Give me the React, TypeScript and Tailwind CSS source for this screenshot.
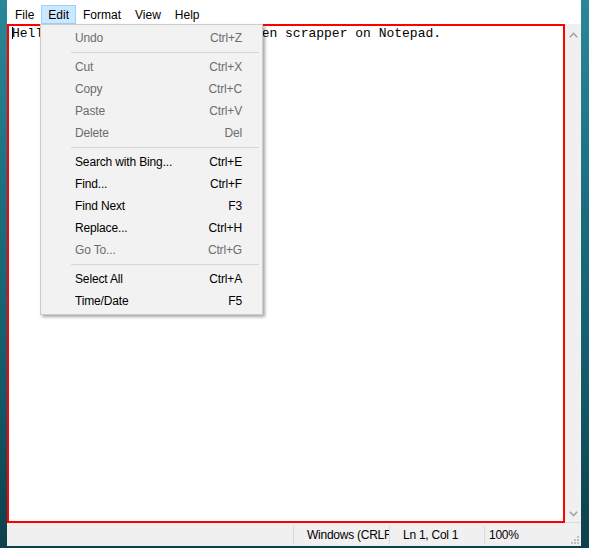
const ui = '"Liberation Sans", Arial, sans-serif';
const mono = '"Liberation Mono", "Courier New", monospace';

type Item = { label: string; key: string; off?: boolean } | 'sep';

const editItems: Item[] = [
  { label: 'Undo', key: 'Ctrl+Z', off: true },
  'sep',
  { label: 'Cut', key: 'Ctrl+X', off: true },
  { label: 'Copy', key: 'Ctrl+C', off: true },
  { label: 'Paste', key: 'Ctrl+V', off: true },
  { label: 'Delete', key: 'Del', off: true },
  'sep',
  { label: 'Search with Bing...', key: 'Ctrl+E' },
  { label: 'Find...', key: 'Ctrl+F' },
  { label: 'Find Next', key: 'F3' },
  { label: 'Replace...', key: 'Ctrl+H' },
  { label: 'Go To...', key: 'Ctrl+G', off: true },
  'sep',
  { label: 'Select All', key: 'Ctrl+A' },
  { label: 'Time/Date', key: 'F5' },
];

function EditMenu() {
  return (
    <div className="absolute left-[33px] top-[24px] z-10 w-[223px] border border-[#cccccc] bg-[#f2f2f2] py-[2px] shadow-[2px_2px_3px_rgba(0,0,0,0.35)]">
      {editItems.map((it, i) =>
        it === 'sep' ? (
          <div key={i} className="py-[3px] pl-[30px] pr-[3px]">
            <div className="h-px bg-[#d7d7d7]" />
          </div>
        ) : (
          <div
            key={i}
            className={`flex h-[22px] items-center justify-between pl-[34px] pr-[20px] text-[12px] tracking-[-0.15px] ${
              it.off ? 'text-[#6d6d6d]' : 'text-black'
            }`}
          >
            <span>{it.label}</span>
            <span>{it.key}</span>
          </div>
        ),
      )}
    </div>
  );
}

function Chevron({ down }: { down?: boolean }) {
  return (
    <svg width="9" height="6" viewBox="0 0 9 6" className="block">
      <path
        d={down ? 'M0.8 0.8 L4.5 4.5 L8.2 0.8' : 'M0.8 5.2 L4.5 1.5 L8.2 5.2'}
        fill="none"
        stroke="#a6a6a6"
        strokeWidth="1.6"
      />
    </svg>
  );
}

function Grip() {
  const dots = [
    [6, 0],
    [3, 3],
    [6, 3],
    [0, 6],
    [3, 6],
    [6, 6],
  ];
  return (
    <svg width="8" height="8" viewBox="0 0 8 8" className="block">
      {dots.map(([x, y], i) => (
        <rect key={i} x={x} y={y} width="2" height="2" fill="#bfbfbf" />
      ))}
    </svg>
  );
}

export default function App() {
  return (
    <div
      className="flex h-[548px] w-[589px] overflow-hidden bg-[linear-gradient(180deg,#2a8797_0%,#1b6f80_35%,#145a69_70%,#0e3f4c_100%)]"
      style={{ fontFamily: ui }}
    >
      <div className="relative ml-[7px] flex h-[546px] w-[574px] flex-col bg-white">
        {/* menu bar */}
        <div className="flex h-[24px] items-start pl-[1px] pt-[5px] text-[12px] text-black">
          {['File', 'Edit', 'Format', 'View', 'Help'].map((m) => (
            <div
              key={m}
              className={`flex h-[19px] items-center border px-[6px] ${
                m === 'Edit' ? 'border-[#99d1ff] bg-[#cce8ff]' : 'border-transparent'
              }`}
            >
              {m}
            </div>
          ))}
        </div>

        {/* editor + scrollbar */}
        <div className="flex h-[499px]">
          <div className="relative flex-1 border-2 border-[#ff0000] pl-[3px] pt-[1px]">
            <div
              className="whitespace-pre text-[13px] leading-[13px] text-black"
              style={{ fontFamily: mono }}
            >
              Hello, this is a test from: screen scrapper on Notepad.
            </div>
            <div className="absolute left-[3px] top-[1px] h-[12px] w-px bg-black" />
          </div>
          <div className="flex w-[16px] flex-col items-center justify-between border-b border-[#dcdcdc] bg-[#f0f0f0] pb-[5px] pt-[8px]">
            <Chevron />
            <Chevron down />
          </div>
        </div>

        {/* status bar */}
        <div className="flex h-[23px] items-center bg-[#f0f0f0] text-[12px] tracking-[-0.25px] text-black">
          <div className="w-[286px]" />
          <div className="h-[18px] w-px bg-[#d9d9d9]" />
          <div className="w-[95px] overflow-hidden whitespace-nowrap pl-[13px]">Windows (CRLF)</div>
          <div className="h-[18px] w-px bg-[#d9d9d9]" />
          <div className="w-[94px] whitespace-nowrap pl-[13px]">Ln 1, Col 1</div>
          <div className="h-[18px] w-px bg-[#d9d9d9]" />
          <div className="flex-1 pl-[4px]">100%</div>
          <div className="self-end pb-[2px] pr-[2px]">
            <Grip />
          </div>
        </div>

        <EditMenu />
      </div>
    </div>
  );
}
